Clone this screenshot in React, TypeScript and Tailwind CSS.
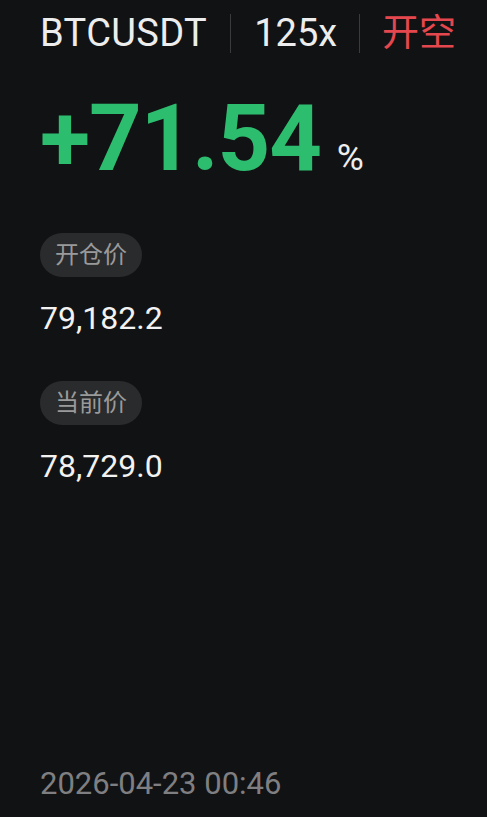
const latin = "font-['Roboto','Noto_Sans_CJK_SC',sans-serif]";

const PriceBlock = ({ label, value }: { label: string; value: string }) => (
  <div className="flex flex-col items-start">
    <span className="flex h-[44px] items-center rounded-full bg-[#2a2b2d] px-[15px] text-[24px] leading-none text-[#9a9a9a]">
      {label}
    </span>
    <span className="mt-[25px] text-[32px] leading-none text-[#f2f2f2]">{value}</span>
  </div>
);

export default function App() {
  return (
    <div className={`flex h-[817px] w-full flex-col bg-[#111214] pl-[40px] ${latin}`}>
      {/* 头部 */}
      <div className="mt-[13px] flex h-[40px] items-center">
        <span className="text-[38px] leading-none tracking-[0.4px] text-[#ededed]">BTCUSDT</span>
        <span className="mx-[23px] h-[39px] w-px bg-[#3a3b3d]" />
        <span className="text-[38px] leading-none text-[#ededed]">125x</span>
        <span className="mx-[22px] h-[39px] w-px bg-[#3a3b3d]" />
        <span className="text-[37px] leading-none text-[#e5474e]">开空</span>
      </div>

      {/* 收益率 */}
      <div className="mt-[40px] flex items-baseline">
        <span className="text-[92px] font-bold leading-none tracking-[-1.2px] text-[#2dbd6e]">+71.54</span>
        <span className="ml-[16px] text-[37px] leading-none text-[#ededed]">%</span>
      </div>

      <div className="mt-[48px] flex flex-col gap-[47px]">
        <PriceBlock label="开仓价" value="79,182.2" />
        <PriceBlock label="当前价" value="78,729.0" />
      </div>

      <div className="mt-auto mb-[18px] text-[31px] leading-none text-[#7f7f81]">2026-04-23 00:46</div>
    </div>
  );
}
